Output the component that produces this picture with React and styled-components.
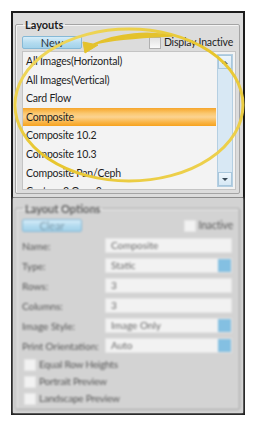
import styled, { createGlobalStyle } from "styled-components";

const GlobalStyle = createGlobalStyle`
  html, body {
    margin: 0;
    padding: 0;
    background: #ffffff;
  }
  body {
    font-family: "Lato", "Noto Sans", sans-serif;
  }
`;

const Page = styled.div`
  position: relative;
  width: 257px;
  height: 428px;
  padding: 11px 0 0 11px;
  box-sizing: border-box;
`;

const Frame = styled.div`
  width: 234px;
  height: 404px;
  border: 2px solid #1c1c1c;
  box-sizing: border-box;
  display: flex;
  flex-direction: column;
  background: #d4d4d4;
`;

const TopPanel = styled.div`
  background: #dcdcdc;
  padding: 5px 3px 3px 2px;
  border-bottom: 1px solid #6a6a6a;
`;

const BottomPanel = styled.div`
  flex: 1;
  background: #d3d3d3;
  padding: 4px 3px 3px 2px;
  filter: blur(1.2px);
  display: flex;
`;

const Group = styled.fieldset`
  margin: 0;
  padding: 0 3px 3px 6px;
  border: 1px solid #a4a4a4;
  box-shadow: inset 1px 1px 0 #f4f4f4;
  border-radius: 2px;
  min-width: 0;
  flex: 1;
  display: flex;
  flex-direction: column;
`;

const Legend = styled.legend`
  padding: 0 2px;
  margin-left: 1px;
  font-size: 11px;
  line-height: 13px;
  font-weight: 700;
  color: ${(p) => (p.$muted ? "#5a5a5a" : "#1c1c1c")};
`;

const Toolbar = styled.div`
  display: flex;
  align-items: center;
  justify-content: space-between;
  margin-top: ${(p) => p.$top || 5}px;
  padding-right: ${(p) => p.$right || 3}px;
`;

const Button = styled.button`
  width: 60px;
  height: 13px;
  padding: 0;
  border: 1px solid #86b9d6;
  border-radius: 2px;
  background: linear-gradient(#d7edf9, #b3dbef 55%, #a3d2ea);
  font-family: inherit;
  font-size: 11px;
  line-height: 11px;
  color: ${(p) => (p.$muted ? "#7f9cad" : "#2a3640")};
`;

const CheckLabel = styled.label`
  display: flex;
  align-items: center;
  gap: 3px;
  font-size: 10.5px;
  letter-spacing: -0.2px;
  line-height: 13px;
  color: ${(p) => (p.$muted ? "#5a5a5a" : "#1e1e1e")};
`;

const Box = styled.span`
  width: 10px;
  height: 10px;
  border: 1px solid ${(p) => (p.$muted ? "#e6e6e6" : "#b0b0b0")};
  background: ${(p) => (p.$muted ? "#f2f2f2" : "linear-gradient(#e2e2e2, #fafafa)")};
  display: inline-block;
`;

const ListBox = styled.div`
  margin-top: 2px;
  height: 137px;
  border: 1px solid #c4c4c4;
  background: #f3f3f3;
  display: flex;
  overflow: hidden;
`;

const Rows = styled.div`
  flex: 1;
  overflow: hidden;
`;

const Row = styled.div`
  height: 18.6px;
  line-height: 18.6px;
  padding-left: 3px;
  font-size: 10.5px;
  letter-spacing: -0.2px;
  color: #1e1e1e;
  white-space: nowrap;
  background: ${(p) =>
    p.$selected
      ? "linear-gradient(#f6a52a, #fbc870 30%, #fbd391 50%, #f9b445 80%, #f6a21e)"
      : "transparent"};
`;

const Scrollbar = styled.div`
  width: 14px;
  margin: 2px 2px 2px 1px;
  background: #d8e8f4;
  border: 1px solid #b5cfe2;
  display: flex;
  flex-direction: column;
  justify-content: space-between;
`;

const ScrollButton = styled.div`
  height: 12px;
  background: linear-gradient(#eef6fc, #d6e8f5);
  border: 1px solid #a9c7dc;
  display: flex;
  align-items: center;
  justify-content: center;

  &::after {
    content: "";
    border-left: 3px solid transparent;
    border-right: 3px solid transparent;
    ${(p) =>
      p.$down
        ? "border-top: 3px solid #3a4a58;"
        : "border-bottom: 3px solid #3a4a58;"}
  }
`;

const Form = styled.div`
  display: grid;
  grid-template-columns: 83px 1fr;
  row-gap: 5px;
  margin-top: 6px;
  padding-right: 4px;
  align-items: center;
`;

const FieldLabel = styled.span`
  font-size: 10px;
  color: #555;
  white-space: nowrap;
`;

const Input = styled.div`
  height: 15px;
  background: #f2f2f2;
  border: 1px solid #e4e4e4;
  box-sizing: border-box;
  font-size: 10px;
  line-height: 13px;
  padding-left: 5px;
  color: #6a6a6a;
  display: flex;
  justify-content: space-between;
`;

const Dropdown = styled.span`
  width: 13px;
  background: #84c0e2;
`;

const Checks = styled.div`
  display: flex;
  flex-direction: column;
  gap: 4px;
  margin-top: 5px;
  padding-left: 2px;
`;

const Overlay = styled.svg`
  position: absolute;
  left: 0;
  top: 0;
  pointer-events: none;
`;

const layouts = [
  "All Images(Horizontal)",
  "All Images(Vertical)",
  "Card Flow",
  "Composite",
  "Composite 10.2",
  "Composite 10.3",
  "Composite Pan/Ceph",
  "Custom 3 Over 3",
];

const fields = [
  { label: "Name:", value: "Composite" },
  { label: "Type:", value: "Static", select: true },
  { label: "Rows:", value: "3" },
  { label: "Columns:", value: "3" },
  { label: "Image Style:", value: "Image Only", select: true },
  { label: "Print Orientation:", value: "Auto", select: true },
];

function Annotation() {
  return (
    <Overlay width="257" height="428" viewBox="0 0 257 428">
      <defs>
        <linearGradient id="gold" x1="0" y1="0" x2="1" y2="1">
          <stop offset="0" stopColor="#f1dc6a" />
          <stop offset="0.5" stopColor="#e7c52c" />
          <stop offset="1" stopColor="#efd458" />
        </linearGradient>
      </defs>
      <ellipse
        cx="129"
        cy="105"
        rx="114"
        ry="76"
        fill="none"
        stroke="url(#gold)"
        strokeWidth="3"
      />
      <path
        d="M172 36 C150 31 118 33 94 44 C118 38 150 37 172 36 Z"
        fill="#e4c22c"
        stroke="#e4c22c"
        strokeWidth="1.5"
        strokeLinejoin="round"
      />
      <path d="M85 53 L83 42 L98 45 Z" fill="#e4c22c" stroke="#e4c22c" strokeWidth="1" strokeLinejoin="round" />
    </Overlay>
  );
}

export default function App() {
  return (
    <>
      <GlobalStyle />
      <Page>
        <Frame>
          <TopPanel>
            <Group>
              <Legend>Layouts</Legend>
              <Toolbar>
                <Button>New</Button>
                <CheckLabel>
                  <Box />
                  Display Inactive
                </CheckLabel>
              </Toolbar>
              <ListBox>
                <Rows>
                  {layouts.map((name) => (
                    <Row key={name} $selected={name === "Composite"}>
                      {name}
                    </Row>
                  ))}
                </Rows>
                <Scrollbar>
                  <ScrollButton />
                  <ScrollButton $down />
                </Scrollbar>
              </ListBox>
            </Group>
          </TopPanel>
          <BottomPanel>
            <Group>
              <Legend $muted>Layout Options</Legend>
              <Toolbar $top={4}>
                <Button $muted>Clear</Button>
                <CheckLabel $muted>
                  <Box $muted />
                  Inactive
                </CheckLabel>
              </Toolbar>
              <Form>
                {fields.map((f) => (
                  <>
                    <FieldLabel key={f.label}>{f.label}</FieldLabel>
                    <Input key={f.label + "v"}>
                      {f.value}
                      {f.select && <Dropdown />}
                    </Input>
                  </>
                ))}
              </Form>
              <Checks>
                {["Equal Row Heights", "Portrait Preview", "Landscape Preview"].map((t) => (
                  <CheckLabel key={t} $muted>
                    <Box $muted />
                    <FieldLabel>{t}</FieldLabel>
                  </CheckLabel>
                ))}
              </Checks>
            </Group>
          </BottomPanel>
        </Frame>
        <Annotation />
      </Page>
    </>
  );
}
